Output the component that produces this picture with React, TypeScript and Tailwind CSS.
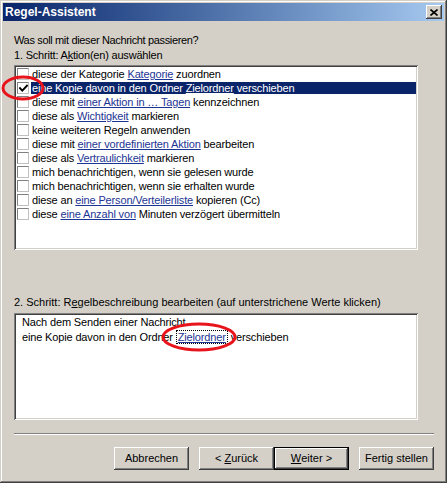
import type { ReactNode } from "react";

type Action = {
  pre: string;
  link?: string;
  post?: string;
  checked?: boolean;
  selected?: boolean;
};

const ACTIONS: Action[] = [
  { pre: "diese der Kategorie ", link: "Kategorie", post: " zuordnen" },
  { pre: "eine Kopie davon in den Ordner ", link: "Zielordner", post: " verschieben", checked: true, selected: true },
  { pre: "diese mit ", link: "einer Aktion in … Tagen", post: " kennzeichnen" },
  { pre: "diese als ", link: "Wichtigkeit", post: " markieren" },
  { pre: "keine weiteren Regeln anwenden" },
  { pre: "diese mit ", link: "einer vordefinierten Aktion", post: " bearbeiten" },
  { pre: "diese als ", link: "Vertraulichkeit", post: " markieren" },
  { pre: "mich benachrichtigen, wenn sie gelesen wurde" },
  { pre: "mich benachrichtigen, wenn sie erhalten wurde" },
  { pre: "diese an ", link: "eine Person/Verteilerliste", post: " kopieren (Cc)" },
  { pre: "diese ", link: "eine Anzahl von", post: " Minuten verzögert übermitteln" },
];

const raised =
  "shadow-[inset_-1px_-1px_#404040,inset_1px_1px_#ffffff,inset_-2px_-2px_#808080,inset_2px_2px_#d4d0c8]";
const sunken =
  "shadow-[inset_1px_1px_#808080,inset_-1px_-1px_#ffffff,inset_2px_2px_#404040,inset_-2px_-2px_#d4d0c8]";

function CheckBox({ checked }: { checked?: boolean }) {
  return (
    <span className="mt-[1px] ml-[1px] flex h-[12px] w-[12px] shrink-0 items-center justify-center border border-t-[#808080] border-l-[#808080] border-r-[#c0c0c0] border-b-[#c0c0c0] bg-white">
      {checked && (
        <svg width="9" height="9" viewBox="0 0 9 9">
          <polyline points="1,4.2 3.3,6.6 8,1.6" fill="none" stroke="#000" strokeWidth="1.9" strokeLinecap="square" />
        </svg>
      )}
    </span>
  );
}

function ActionRow({ action }: { action: Action }) {
  const sel = action.selected;
  return (
    <div className="flex h-[14px]">
      <CheckBox checked={action.checked} />
      <div
        className={`ml-[2px] mt-[1px] h-[12px] flex-1 pl-[1px] leading-[12px] whitespace-nowrap ${
          sel ? "bg-[#0a246a] text-white" : "text-black"
        }`}
      >
        {action.pre}
        {action.link && (
          <span className={`underline ${sel ? "text-white" : "text-[#1c3594]"}`}>{action.link}</span>
        )}
        {action.post}
      </div>
    </div>
  );
}

function WinButton({ children, isDefault }: { children: ReactNode; isDefault?: boolean }) {
  return (
    <button
      className={`flex h-[23px] w-[75px] items-center justify-center bg-[#d4d0c8] text-black ${
        isDefault ? "border border-black" : ""
      } ${raised}`}
    >
      {children}
    </button>
  );
}

export default function App() {
  return (
    <div className="relative h-[483px] w-[447px] bg-[#d4d0c8] p-[3px] font-['Liberation_Sans',Arial,sans-serif] text-[11px] shadow-[inset_-1px_-1px_#404040,inset_1px_1px_#d4d0c8,inset_-2px_-2px_#808080,inset_2px_2px_#ffffff]">
      {/* title bar */}
      <div className="flex h-[18px] items-center justify-between bg-linear-to-r from-[#0a246a] to-[#a6caf0] pl-[2px] pr-[2px]">
        <span className="text-[12px] font-bold text-white">Regel-Assistent</span>
        <span className={`flex h-[14px] w-[16px] items-center justify-center bg-[#d4d0c8] ${raised}`}>
          <svg width="8" height="7" viewBox="0 0 8 7">
            <path d="M0.5 0.5 L7.5 6.5 M7.5 0.5 L0.5 6.5" stroke="#000" strokeWidth="1.6" />
          </svg>
        </span>
      </div>

      <div className="flex flex-col pl-[11px] pt-[12px]">
        <p className="leading-[15px] tracking-[-0.35px]">Was soll mit dieser Nachricht passieren?</p>
        <p className="leading-[15px] tracking-[-0.2px]">
          1. Schritt: A<span className="underline">k</span>tion(en) auswählen
        </p>

        <div className={`mt-[2px] h-[185px] w-[404px] bg-white p-[2px] tracking-[-0.15px] ${sunken}`}>
          {ACTIONS.map((action) => (
            <ActionRow key={action.pre + (action.link ?? "")} action={action} />
          ))}
        </div>

        <p className="mt-[45px] leading-[15px]">
          2. Schritt: R<span className="underline">e</span>gelbeschreibung bearbeiten (auf unterstrichene Werte
          klicken)
        </p>
        <div className={`mt-[3px] h-[107px] w-[404px] bg-white px-[2px] pt-[2px] tracking-[-0.15px] ${sunken}`}>
          <div className="pl-[6px] leading-[15px]">
            <p>Nach dem Senden einer Nachricht</p>
            <p>
              eine Kopie davon in den Ordner{" "}
              <span className="border border-dotted border-black px-[1px] text-[#1c3594] underline">Zielordner</span>{" "}
              verschieben
            </p>
          </div>
        </div>

        <div className="mt-[13px] mr-[10px] h-[2px] border-t border-b border-t-[#808080] border-b-white" />

        <div className="mt-[12px] mr-[10px] flex justify-end">
          <WinButton>Abbrechen</WinButton>
          <div className="ml-[10px] flex">
            <WinButton>
              &lt;&nbsp;<span className="underline">Z</span>urück
            </WinButton>
            <WinButton isDefault>
              <span className="underline">W</span>eiter &gt;
            </WinButton>
          </div>
          <div className="ml-[10px]">
            <WinButton>Fertig stellen</WinButton>
          </div>
        </div>
      </div>

      {/* red annotation marks */}
      <svg className="pointer-events-none absolute left-0 top-0" width="447" height="483">
        <ellipse cx="23" cy="88" rx="20" ry="11" fill="none" stroke="#e8141c" strokeWidth="3" />
        <ellipse cx="199" cy="337" rx="36" ry="13" fill="none" stroke="#e8141c" strokeWidth="3" />
      </svg>
    </div>
  );
}
